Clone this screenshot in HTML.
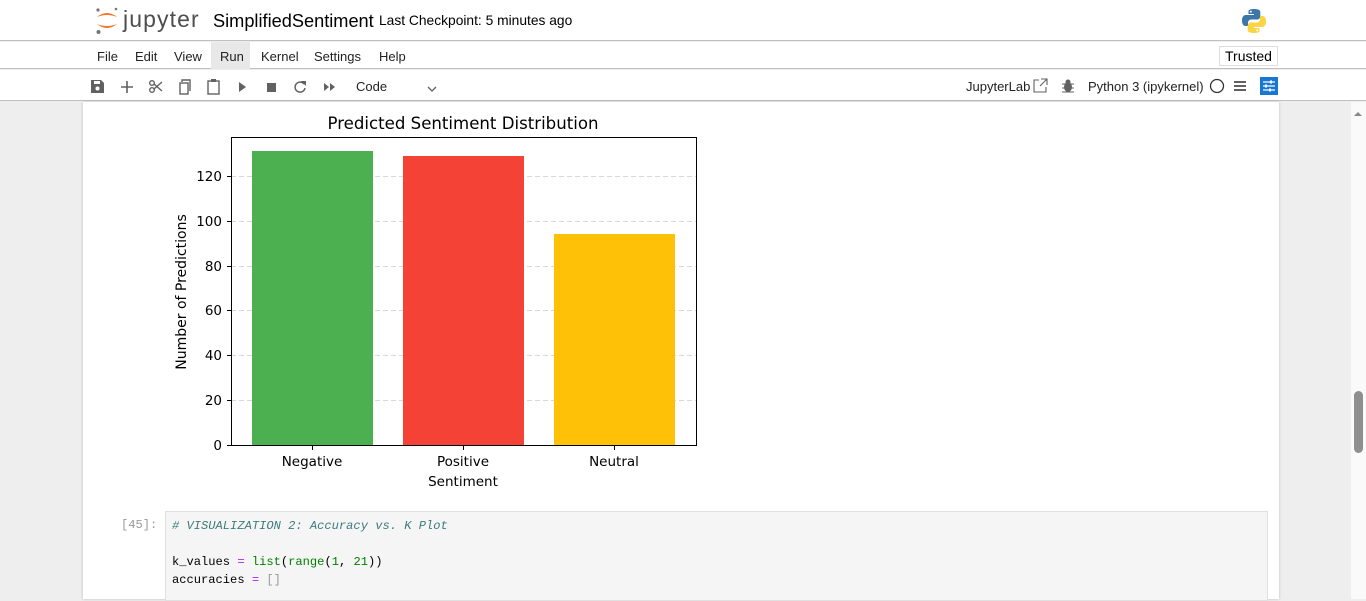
<!DOCTYPE html>
<html><head><meta charset="utf-8"><style>
*{margin:0;padding:0;box-sizing:border-box}
body{width:1366px;height:599px;overflow:hidden;background:#eeeeee;font-family:"Liberation Sans",sans-serif;position:relative}
.abs{position:absolute}
#top{left:0;top:0;width:1366px;height:41px;background:#fff;border-bottom:1px solid #c0c0c0}
#menu{left:0;top:42px;width:1366px;height:27px;background:#fff;border-bottom:1px solid #c0c0c0;font-size:13px;color:#222}
#menu span{position:absolute;top:7px}
#tool{left:0;top:70px;width:1366px;height:31px;background:#fff;border-bottom:1px solid #c0c0c0;font-size:13px;color:#222}
#panel{left:83px;top:102px;width:1196px;height:497px;background:#fff;box-shadow:0 0 3px rgba(0,0,0,.2)}
#sb{left:1351px;top:102px;width:15px;height:497px;background:#fafafa}
.mono{font-family:"Liberation Mono",monospace;font-size:12.1px}
</style></head><body>
<div id="top" class="abs">
 <svg class="abs" style="left:94px;top:7px" width="26" height="28" viewBox="0 0 26 28">
  <circle cx="4" cy="3" r="1.6" fill="#767677"/><circle cx="22" cy="2" r="1.3" fill="#767677"/><circle cx="4.5" cy="25" r="2" fill="#767677"/>
  <path d="M3 10 Q13 2 23 10 Q13 6 3 10Z" fill="#f37726"/><path d="M3 17 Q13 25 23 17 Q13 21 3 17Z" fill="#f37726"/>
 </svg>
 <span class="abs" style="left:123px;top:6px;font-size:23px;color:#4e4e4e;letter-spacing:1.1px">jupyter</span>
 <span class="abs" style="left:213px;top:11px;font-size:18.2px;color:#000">SimplifiedSentiment</span>
 <span class="abs" style="left:379px;top:13px;font-size:13.8px;color:#000">Last Checkpoint: 5 minutes ago</span>
 <svg class="abs" style="left:1241px;top:8px" width="26" height="26" viewBox="0 0 26 26">
  <path d="M12.5 1C7 1 7.5 3.5 7.5 3.5V6h5.5v1H5S1 6.7 1 12.5 4.5 18 4.5 18H7v-3s-.2-3.5 3.5-3.5h5.5s3.3 0 3.3-3.3V3.8S19.8 1 12.5 1z" fill="#3b77a8"/>
  <circle cx="9.8" cy="3.6" r="1" fill="#fff"/>
  <path d="M13.5 25c5.5 0 5-2.5 5-2.5V20H13v-1h8s4 .3 4-5.5-3.5-5.5-3.5-5.5H19v3s.2 3.5-3.5 3.5H10s-3.3 0-3.3 3.3v4.4S6.2 25 13.5 25z" fill="#fdd444"/>
  <circle cx="16.2" cy="22.4" r="1" fill="#fff"/>
 </svg>
</div>
<div id="menu" class="abs">
 <div class="abs" style="left:211px;top:0;width:39px;height:27px;background:#e8e8e8"></div>
 <span style="left:97px">File</span><span style="left:135px">Edit</span><span style="left:174px">View</span><span style="left:220px">Run</span><span style="left:261px">Kernel</span><span style="left:314px">Settings</span><span style="left:379px">Help</span>
 <div class="abs" style="left:1219px;top:4px;width:59px;height:20px;border:1px solid #ddd;font-size:14px;text-align:center;line-height:18px;color:#000">Trusted</div>
</div>
<div id="tool" class="abs">
 <svg class="abs" style="left:90px;top:8px" width="360" height="18" viewBox="0 0 360 18" fill="#616161" stroke="#616161">
  <path d="M1 2h10l3 3v10H1z" stroke="none"/><rect x="4" y="3" width="6" height="3" fill="#fff" stroke="none"/><circle cx="7.5" cy="10.5" r="2" fill="#fff" stroke="none"/>
  <path d="M37 3v12M31 9h12" stroke-width="1.6" fill="none"/>
  <circle cx="62" cy="12" r="2.3" fill="none" stroke-width="1.4"/><circle cx="62" cy="5" r="2.3" fill="none" stroke-width="1.4"/><path d="M64 6l8 7M64 11l8-7" stroke-width="1.4" fill="none"/>
  <rect x="90" y="5" width="8" height="11" fill="none" stroke-width="1.4"/><path d="M92 4V2h8v11" fill="none" stroke-width="1.4"/>
  <rect x="118" y="3" width="11" height="13" fill="none" stroke-width="1.4"/><rect x="121" y="1" width="5" height="3" stroke="none"/>
  <path d="M149 4l7 5-7 5z" stroke="none"/>
  <rect x="177" y="5" width="9" height="9" stroke="none"/>
  <path d="M214 6a5 5 0 1 0 1 4" fill="none" stroke-width="1.5"/><path d="M211 3h5v5z" stroke="none"/>
  <path d="M234 5l5 4-5 4zM240 5l5 4-5 4z" stroke="none"/>
  <path d="M338 9l4 4 4-4" fill="none" stroke-width="1.3"/>
 </svg>
 <span class="abs" style="left:356px;top:9px">Code</span>
 <span class="abs" style="left:966px;top:9px">JupyterLab</span>
 <svg class="abs" style="left:1033px;top:8px" width="15" height="15" viewBox="0 0 15 15" fill="none" stroke="#616161" stroke-width="1.1"><path d="M6 2H1v12h12V9M8 1h6v6M14 1L7 8"/></svg>
 <svg class="abs" style="left:1061px;top:9px" width="14" height="14" viewBox="0 0 14 14" fill="#616161"><ellipse cx="7" cy="8" rx="4" ry="5"/><path d="M1 5h12M1 9h12M1 13h12" stroke="#616161"/><circle cx="7" cy="3" r="2.5"/></svg>
 <span class="abs" style="left:1088px;top:9px">Python 3 (ipykernel)</span>
 <svg class="abs" style="left:1209px;top:8px" width="16" height="16"><circle cx="8" cy="8" r="6.5" fill="none" stroke="#333" stroke-width="1.3"/></svg>
 <svg class="abs" style="left:1233px;top:9px" width="14" height="14" fill="#616161"><rect x="1" y="2" width="12" height="2"/><rect x="1" y="6" width="12" height="2"/><rect x="1" y="10" width="12" height="2"/></svg>
 <svg class="abs" style="left:1260px;top:7px" width="18" height="18"><rect width="18" height="18" fill="#1976d2"/><path d="M3 5h12M3 9h12M3 13h12" stroke="#fff" stroke-width="1.3"/><rect x="10" y="3.5" width="2" height="3" fill="#fff"/><rect x="5" y="7.5" width="2" height="3" fill="#fff"/><rect x="9" y="11.5" width="2" height="3" fill="#fff"/></svg>
</div>
<div id="panel" class="abs"></div>
<svg class="abs" style="left:0;top:0" width="1366" height="599" font-family="DejaVu Sans, sans-serif">
 <text x="463" y="129" font-size="16.6" text-anchor="middle" fill="#000">Predicted Sentiment Distribution</text>
 <g stroke="#cccccc" stroke-dasharray="5,3" stroke-width="0.8">
  <line x1="231" x2="696" y1="176.5" y2="176.5"/><line x1="231" x2="696" y1="221.5" y2="221.5"/><line x1="231" x2="696" y1="266.5" y2="266.5"/><line x1="231" x2="696" y1="310.5" y2="310.5"/><line x1="231" x2="696" y1="355.5" y2="355.5"/><line x1="231" x2="696" y1="400.5" y2="400.5"/>
 </g>
 <rect x="252" y="151" width="121" height="294" fill="#4caf50"/>
 <rect x="403" y="156" width="121" height="289" fill="#f44336"/>
 <rect x="554" y="234" width="121" height="211" fill="#ffc107"/>
 <rect x="231.5" y="137.5" width="465" height="308" fill="none" stroke="#000" stroke-width="1"/>
 <g stroke="#000"><line x1="227" x2="231" y1="445.5" y2="445.5"/><line x1="227" x2="231" y1="400.5" y2="400.5"/><line x1="227" x2="231" y1="355.5" y2="355.5"/><line x1="227" x2="231" y1="310.5" y2="310.5"/><line x1="227" x2="231" y1="266.5" y2="266.5"/><line x1="227" x2="231" y1="221.5" y2="221.5"/><line x1="227" x2="231" y1="176.5" y2="176.5"/>
 <line x1="312.5" x2="312.5" y1="446" y2="450"/><line x1="463.5" x2="463.5" y1="446" y2="450"/><line x1="614.5" x2="614.5" y1="446" y2="450"/></g>
 <g font-size="13.5" text-anchor="end" fill="#000">
  <text x="222" y="450">0</text><text x="222" y="405">20</text><text x="222" y="360">40</text><text x="222" y="315">60</text><text x="222" y="271">80</text><text x="222" y="226">100</text><text x="222" y="181">120</text>
 </g>
 <g font-size="13.5" text-anchor="middle" fill="#000">
  <text x="312" y="466">Negative</text><text x="463" y="466">Positive</text><text x="614" y="466">Neutral</text>
  <text x="463" y="486">Sentiment</text>
  <text transform="translate(186,292) rotate(-90)" font-size="14">Number of Predictions</text>
 </g>
</svg>
<div class="abs mono" style="left:121px;top:518px;color:#999">[45]:</div>
<div class="abs" style="left:165px;top:511px;width:1103px;height:90px;background:#f5f5f5;border:1px solid #e0e0e0"></div>
<div class="abs mono" style="left:172px;top:517px;line-height:18px;color:#000;white-space:pre"><span style="color:#3d7b7b;font-style:italic"># VISUALIZATION 2: Accuracy vs. K Plot</span>

k_values <span style="color:#aa22ff">=</span> <span style="color:#008000">list</span>(<span style="color:#008000">range</span>(<span style="color:#008000">1</span>, <span style="color:#008000">21</span>))
accuracies <span style="color:#aa22ff">=</span> <span style="color:#999">[]</span></div>
<div id="sb" class="abs"><div class="abs" style="left:3px;top:10px;width:0;height:0;border-left:4px solid transparent;border-right:4px solid transparent;border-bottom:4px solid #888"></div><div class="abs" style="left:3px;top:289px;width:9px;height:62px;background:#8f8f8f;border-radius:5px"></div></div>
</body></html>
